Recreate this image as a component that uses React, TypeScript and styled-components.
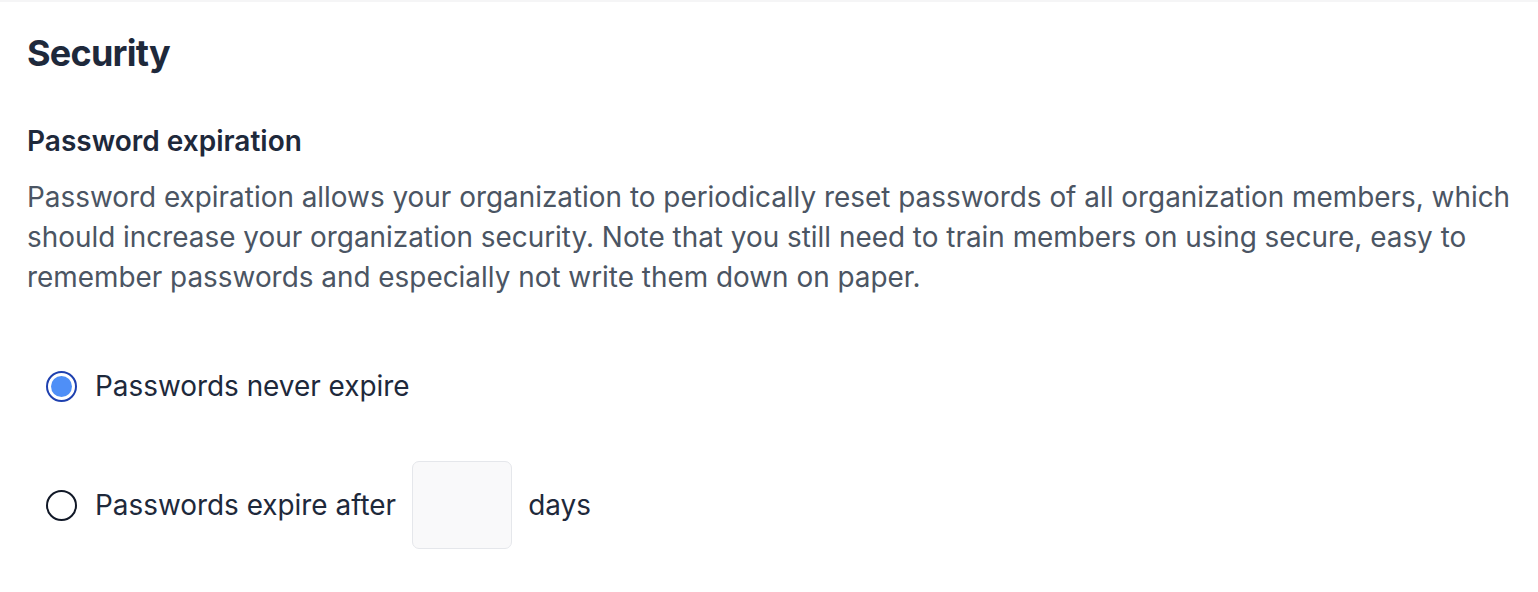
import React, { useState } from "react";
import styled, { createGlobalStyle } from "styled-components";

const GlobalStyle = createGlobalStyle`
  body {
    margin: 0;
    background: #ffffff;
    font-family: Inter, "Noto Sans", sans-serif;
  }
`;

const TopStrip = styled.div`
  height: 2px;
  background: #f5f5f6;
`;

const Page = styled.div`
  padding: 28px 27px 0;
`;

const Title = styled.h1`
  margin: 0;
  font-size: 36px;
  line-height: 46px;
  font-weight: 700;
  color: #1e293b;
  letter-spacing: -0.75px;
`;

const SectionTitle = styled.h2`
  margin: 49px 0 0;
  font-size: 28px;
  line-height: 32px;
  font-weight: 600;
  color: #1e293b;
`;

const Description = styled.p`
  margin: 20px 0 0;
  font-size: 27.9px;
  line-height: 40px;
  color: #4b5563;
  max-width: 1505px;
`;

const Options = styled.div`
  display: flex;
  flex-direction: column;
  gap: 31px;
  margin-top: 45px;
`;

const OptionRow = styled.label`
  display: flex;
  align-items: center;
  height: 88px;
  padding-left: 19px;
  gap: 16px;
  font-size: 27.9px;
  color: #1e293b;
  cursor: pointer;
`;

const Radio = styled.span<{ $checked: boolean }>`
  box-sizing: border-box;
  width: 31px;
  height: 31px;
  border-radius: 50%;
  border: 2px solid ${(p) => (p.$checked ? "#1e40af" : "#111827")};
  padding: 3px;
  margin-right: 2px;
  flex-shrink: 0;
  display: flex;

  &::after {
    content: "";
    flex: 1;
    border-radius: 50%;
    background: ${(p) => (p.$checked ? "#4f8ff7" : "transparent")};
  }
`;

const DaysInput = styled.input`
  box-sizing: border-box;
  width: 100px;
  height: 88px;
  border: 1px solid #e5e7eb;
  border-radius: 7px;
  background: #f9f9fa;
  font: inherit;
  text-align: center;
  outline: none;
`;

export default function App() {
  const [mode, setMode] = useState<"never" | "after">("never");

  return (
    <>
      <GlobalStyle />
      <TopStrip />
      <Page>
        <Title>Security</Title>
        <SectionTitle>Password expiration</SectionTitle>
        <Description>
          Password expiration allows your organization to periodically reset passwords of all organization
          members, which should increase your organization security. Note that you still need to train
          members on using secure, easy to remember passwords and especially not write them down on paper.
        </Description>
        <Options>
          <OptionRow onClick={() => setMode("never")}>
            <Radio $checked={mode === "never"} />
            Passwords never expire
          </OptionRow>
          <OptionRow onClick={() => setMode("after")}>
            <Radio $checked={mode === "after"} />
            Passwords expire after
            <DaysInput type="text" />
            days
          </OptionRow>
        </Options>
      </Page>
    </>
  );
}
